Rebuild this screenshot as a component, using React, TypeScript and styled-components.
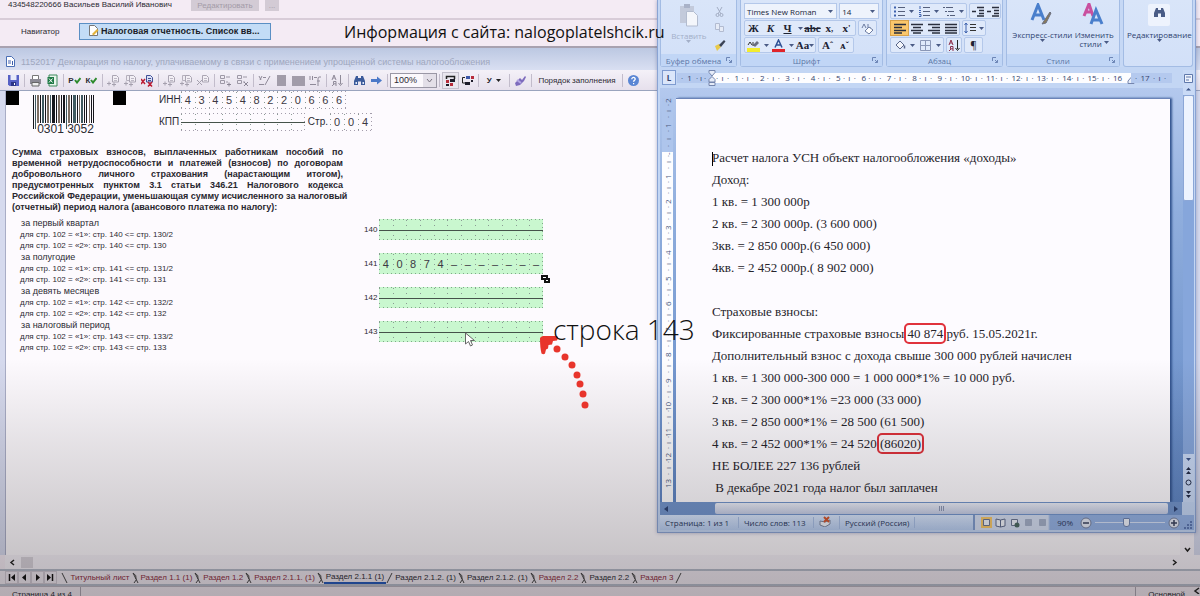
import React from "react";
import styled, { createGlobalStyle, css } from "styled-components";

const Global = createGlobalStyle`
  * { box-sizing: border-box; }
  html, body, #root { height: 100%; margin: 0; }
  body { overflow: hidden; font-family: "Liberation Sans", sans-serif; }
  button, input, select { font: inherit; color: inherit; margin: 0; padding: 0; border: 0; background: none; border-radius: 0; }
  h1, h2, p, ul { margin: 0; padding: 0; font-weight: inherit; font-size: inherit; }
`;

/* ---------- desktop ---------- */
const Desktop = styled.div`
  position: relative;
  min-height: 100%;
  height: 100vh;
  display: flex;
  flex-direction: column;
  background: #f4ebf4;
  overflow: hidden;
  color: #2c2a33;
`;
const Shade = styled.div`
  position: absolute;
  inset: 60% 0 0 0;
  background: linear-gradient(to bottom, rgba(20, 14, 16, 0), rgba(20, 14, 16, 0.1) 35%, rgba(20, 14, 16, 0.27));
  pointer-events: none;
`;
const PersonBar = styled.header`
  display: flex;
  align-items: flex-start;
  height: 20px;
  flex: none;
  padding-left: 8px;
  border-bottom: 2px solid #d8ccd8;
  font-size: 8px;
  line-height: 9px;
`;
const PersonName = styled.span`
  width: 183px;
  white-space: nowrap;
`;
const DisabledButton = styled.button<{ $w: number }>`
  width: ${(p) => p.$w}px;
  height: 11px;
  margin-right: 6px;
  background: #d3cbd5;
  color: #a39ba8;
  line-height: 9px;
`;
const NavBar = styled.nav`
  display: flex;
  align-items: center;
  flex: none;
  height: 28px;
  padding: 0 0 4px 21px;
  border-bottom: 2px solid #a8a2b0;
  font-size: 8px;
`;
const NavLink = styled.a`
  width: 58px;
  color: inherit;
  text-decoration: none;
`;
const NavTab = styled.button`
  display: flex;
  align-items: center;
  gap: 2px;
  width: 192px;
  height: 17px;
  padding-left: 9px;
  border: 1px solid #5a8fc4;
  background: #c3dcf6;
  font-weight: bold;
  font-size: 9px;
  color: #1a1c28;
  white-space: nowrap;
`;
const TitleBar = styled.div`
  display: flex;
  align-items: center;
  gap: 6px;
  flex: none;
  height: 22px;
  padding: 5px 0 0 6px;
  background: linear-gradient(#bcc8e2, #d9dff2);
  color: #9fa7be;
  font-size: 9px;
  white-space: nowrap;
`;

/* ---------- report toolbar ---------- */
const Toolbar = styled.div`
  display: flex;
  align-items: center;
  flex: none;
  height: 21px;
  padding-left: 5px;
  background: linear-gradient(#f4f1f8, #e6e0ec);
  border-bottom: 1px solid #9aa4be;
  font-size: 8px;
`;
const Tool = styled.button<{ $on?: boolean; $w?: number }>`
  display: flex;
  align-items: center;
  justify-content: center;
  flex: none;
  width: ${(p) => p.$w ?? 17}px;
  height: 17px;
  white-space: nowrap;
  ${(p) => p.$on && css`border: 1px solid #c3bfcb; background: #e9e6ee;`}
`;
const Divider = styled.i`
  flex: none;
  width: 1px;
  height: 13px;
  margin: 0 2px;
  background: #c2bccb;
`;
const ZoomWrap = styled.div`
  position: relative;
  width: 47px;
  height: 15px;
  svg { position: absolute; right: 1px; top: 1px; pointer-events: none; }
`;
const ZoomBox = styled.select`
  appearance: none;
  width: 100%;
  height: 15px;
  padding-left: 3px;
  border: 1px solid #9a97a5;
  background: #fbf8fc;
  font-size: 9px;
`;

/* ---------- tax form ---------- */
const FormArea = styled.div`
  display: flex;
  flex: 1;
  min-height: 0;
  border: solid #d6daee;
  border-width: 0 6px 0 5px;
`;
const Form = styled.main`
  flex: 1;
  min-width: 0;
  overflow: hidden;
  border-left: 1px solid #a9adc6;
  background: #fdfafe;
`;
const FormScroll = styled.div`
  display: flex;
  flex-direction: column;
  justify-content: flex-end;
  align-items: center;
  width: 14px;
  padding-bottom: 2px;
  background: #f6f2f9;
`;
const FormHead = styled.div`
  display: flex;
  align-items: flex-start;
  height: 56px;
`;
const Marker = styled.i`
  flex: none;
  width: 13px;
  height: 14px;
  background: #000;
`;
const Barcode = styled.figure`
  margin: 4px 15px 0 14px;
  width: 65px;
  text-align: center;
  font-size: 12px;
  line-height: 11px;
  color: #2a2a30;
  svg { display: block; }
  figcaption { margin-top: -5px; white-space: nowrap; }
`;
const CodeLabel = styled.span<{ $w: number; $end?: boolean }>`
  width: ${(p) => p.$w}px;
  font-size: 10px;
  line-height: 18px;
  text-align: ${(p) => (p.$end ? "right" : "left")};
  padding-right: 2px;
`;
const Ids = styled.div`
  margin-left: 33px;
`;
const IdRow = styled.div<{ $top?: number }>`
  display: flex;
  align-items: center;
  padding-top: ${(p) => p.$top ?? 0}px;
`;
const dots = (c: string, bg: string) => css`
  background:
    linear-gradient(90deg, ${c} 1px, transparent 1px) left top / 4px 1px repeat-x,
    linear-gradient(90deg, ${c} 1px, transparent 1px) left bottom / 4px 1px repeat-x,
    linear-gradient(${c} 1px, transparent 1px) right top / 1px 4px repeat-y,
    ${bg};
`;
const Cells = styled.div<{ $n: number; $w: number; $green?: boolean }>`
  position: relative;
  display: grid;
  grid-template-columns: repeat(${(p) => p.$n}, 1fr);
  flex: none;
  width: ${(p) => p.$w}px;
  height: ${(p) => (p.$green ? 21 : 18)}px;
  ${(p) => (p.$green ? dots("#7fa888", "#c9f7cf") : dots("#a39dab", "transparent"))}
  font-size: 11px;
  color: #3c3843;
`;
const Cell = styled.span`
  display: flex;
  align-items: center;
  justify-content: center;
  background: linear-gradient(#8a9a94 1px, transparent 1px) left 1px / 1px 5px repeat-y;
`;
const Strike = styled.i`
  position: absolute;
  left: 0;
  right: 0;
  top: 50%;
  height: 1px;
  background: #45524a;
`;
const Lead = styled.p`
  width: 331px;
  margin-left: 6px;
  font-weight: bold;
  font-size: 9px;
  line-height: 11px;
  color: #29272f;
  span { display: block; text-align-last: justify; white-space: nowrap; }
  span:last-child { text-align-last: left; }
`;
const Periods = styled.ul`
  list-style: none;
  padding-top: 4px;
`;
const Period = styled.li`
  display: flex;
  align-items: flex-start;
  height: 34px;
  padding-left: 14px;
`;
const PeriodText = styled.div`
  width: 344px;
  font-size: 8px;
  line-height: 11px;
  h2 { font-size: 9px; line-height: 12px; padding-left: 1px; }
`;
const FieldLabel = styled.label`
  width: 15px;
  padding-top: 2px;
  font-size: 8px;
  line-height: 22px;
`;
const FieldBox = styled.div`
  padding-top: 2px;
`;

/* ---------- bottom ---------- */
const HScroll = styled.div`
  display: flex;
  align-items: center;
  flex: none;
  height: 14px;
  margin-left: 5px;
  padding: 0 22px 0 4px;
  background: #f6f2f9;
`;
const HThumb = styled.i`
  width: 12px;
  height: 11px;
  margin-left: 5px;
  margin-right: auto;
  background: #d9d4dc;
`;
const SheetTabs = styled.div`
  display: flex;
  align-items: center;
  flex: none;
  height: 17px;
  padding-left: 5px;
  border-top: 2px solid #b4bac8;
  border-bottom: 2px solid #b4bac8;
  background: #eee8f0;
  font-size: 8px;
`;
const StepButton = styled.button`
  display: flex;
  align-items: center;
  justify-content: center;
  width: 13px;
  height: 13px;
  border: 1px solid #cfc8d2;
`;
const SheetTab = styled.button<{ $red?: boolean; $active?: boolean }>`
  height: 12px;
  padding: 0 2px;
  white-space: nowrap;
  color: ${(p) => (p.$red ? "#8d2b3c" : "#2c2a33")};
  ${(p) => p.$active && css`border-bottom: 2px solid #2458b8;`}
`;
const StatusBar = styled.footer`
  display: flex;
  flex: none;
  height: 10px;
  overflow: hidden;
  border-top: 1px solid #b9b3be;
  font-size: 8px;
  line-height: 15px;
  background: #eee6ee;
`;
const StatusCell = styled.span<{ $end?: boolean }>`
  padding: 0 8px 0 12px;
  border: solid #aaa4b0;
  border-width: ${(p) => (p.$end ? "0 0 0 1px" : "0 1px 0 0")};
  margin-left: ${(p) => (p.$end ? "auto" : "0")};
`;

/* ---------- annotations over the windows ---------- */
const Caption = styled.div<{ $x: number; $y: number; $size: number; $light?: boolean }>`
  position: absolute;
  left: ${(p) => p.$x}px;
  top: ${(p) => p.$y}px;
  font-family: "Open Sans", sans-serif;
  font-weight: ${(p) => (p.$light ? 300 : 400)};
  font-size: ${(p) => p.$size}px;
  line-height: ${(p) => p.$size + 8}px;
  color: #111;
  white-space: nowrap;
`;
const Overlay = styled.svg<{ $x: number; $y: number }>`
  position: absolute;
  left: ${(p) => p.$x}px;
  top: ${(p) => p.$y}px;
`;

/* ---------- word processor ---------- */
const Word = styled.section`
  position: absolute;
  left: 657px;
  right: 4px;
  top: 0;
  height: 533px;
  display: flex;
  flex-direction: column;
  padding: 0 1px 2px 2px;
  background: #c3d6f4;
  border: solid #8aa4d4;
  border-width: 0 1px 1px 1px;
  box-shadow: 0 0 4px rgba(60, 70, 120, 0.4);
  font-family: "Open Sans", "Noto Sans", sans-serif;
  font-size: 8px;
  color: #35456e;
`;
const Ribbon = styled.div`
  display: flex;
  gap: 3px;
  flex: none;
  height: 67px;
  background: #c6d8f5;
`;
const Group = styled.div<{ $w: number }>`
  display: flex;
  flex-direction: column;
  width: ${(p) => p.$w}px;
  flex: none;
  border: 1px solid #a3bce4;
  border-top: 0;
  border-radius: 0 0 3px 3px;
  background: linear-gradient(#d9e5f9, #d2e0f8);
`;
const GroupBody = styled.div<{ $row?: boolean }>`
  display: flex;
  flex-direction: ${(p) => (p.$row ? "row" : "column")};
  justify-content: ${(p) => (p.$row ? "space-evenly" : "flex-start")};
  gap: ${(p) => (p.$row ? 0 : 1)}px;
  flex: 1;
  padding: 3px 3px 0;
`;
const GroupCaption = styled.div`
  display: flex;
  align-items: center;
  height: 12px;
  background: #c1d6f6;
  color: #5c76a6;
  span { flex: 1; text-align: center; white-space: nowrap; }
  svg { margin-right: 4px; }
`;
const RibbonRow = styled.div`
  display: flex;
  gap: 2px;
  height: 16px;
`;
const Strip = styled.div`
  display: flex;
  border: 1px solid #b4c8ea;
  border-radius: 2px;
  background: #dfe9fa;
`;
const StripButton = styled.button<{ $on?: boolean; $w?: number; $serif?: boolean }>`
  display: flex;
  align-items: center;
  justify-content: center;
  width: ${(p) => p.$w ?? 17}px;
  color: #1d2333;
  font-size: 10px;
  line-height: 13px;
  ${(p) => p.$serif && css`font-family: "Liberation Serif", serif; font-weight: bold; font-size: 11px;`}
  ${(p) => p.$on && css`background: #fbc76b; box-shadow: 0 0 0 1px #d8a24b;`}
`;
const FontSelect = styled.button<{ $w: number }>`
  display: flex;
  align-items: center;
  justify-content: space-between;
  width: ${(p) => p.$w}px;
  padding: 0 3px 0 2px;
  border: 1px solid #b4c8ea;
  background: #eef3fc;
  color: #20263a;
  font-size: 8px;
`;
const BigButton = styled.button<{ $faded?: boolean }>`
  display: flex;
  flex-direction: column;
  align-items: center;
  color: ${(p) => (p.$faded ? "#a3afc8" : "#2e4270")};
  font-size: 8px;
  line-height: 9px;
  white-space: nowrap;
  svg { flex: none; margin-bottom: 3px; }
`;
const SideIcons = styled.div`
  display: flex;
  flex-direction: column;
  justify-content: space-around;
`;
const RulerRow = styled.div`
  display: flex;
  align-items: center;
  flex: none;
  height: 21px;
  padding: 0 22px 0 2px;
  i { font-style: normal; }
`;
const Corner = styled.button`
  width: 14px;
  height: 15px;
  margin-right: 1px;
  border: 1px solid #7e9bd0;
  background: #dbe6fa;
  font-weight: bold;
  line-height: 12px;
`;
const RulerPart = styled.div<{ $blue?: boolean; $w?: number; $n: number }>`
  position: relative;
  display: grid;
  grid-template-columns: repeat(${(p) => p.$n}, 1fr);
  align-items: center;
  ${(p) => (p.$w ? css`width: ${p.$w}px; flex: none; padding: 0 6px 0 4px;` : css`flex: 1; padding: 0 9px 0 4px;`)}
  height: 10px;
  background: ${(p) => (p.$blue ? "#b4c9ee" : "#fdfdff")};
  line-height: 10px;
`;
const Indent = styled.span<{ $right?: boolean }>`
  position: absolute;
  top: -3px;
  ${(p) => (p.$right ? "right: -4px;" : "left: -4px;")}
  line-height: 0;
`;
const RulerCell = styled.span`
  display: flex;
  justify-content: space-between;
  b { font-weight: 400; width: 9px; display: flex; justify-content: center; }
`;
const Work = styled.div`
  flex: 1;
  min-height: 0;
  display: flex;
  background: linear-gradient(#b4c9ee, #90aedd 30%, #5f86c4);
`;
const VRuler = styled.div`
  display: flex;
  flex-direction: column;
  flex: none;
  width: 11px;
  margin: 10px 3px 0 2px;
  background: linear-gradient(#aec5ec 54px, #fdfdff 54px);
  color: #4c5a80;
  overflow: hidden;
  i { font-style: normal; }
`;
const VCell = styled.span<{ $h?: number }>`
  writing-mode: vertical-rl;
  transform: rotate(180deg);
  flex: none;
  display: flex;
  justify-content: space-between;
  flex-direction: row-reverse;
  height: ${(p) => p.$h ?? 25}px;
  width: 11px;
  line-height: 11px;
  &:nth-child(even) { height: 26px; }
  b { font-weight: 400; height: 8px; display: flex; justify-content: center; }
`;
const Page = styled.article`
  flex: 1;
  min-width: 0;
  margin: 10px 13px 0 0;
  padding: 48px 0 0 36px;
  overflow: hidden;
  border-top: 1px solid #6b84b8;
  box-shadow: 2px 0 2px #33548f;
  background: #fdfbff;
  font-family: "Liberation Serif", serif;
  font-size: 13px;
  line-height: 22px;
  color: #26242b;
  white-space: pre;
`;
const Boxed = styled.mark`
  background: none;
  color: inherit;
  outline: 2px solid #e0323c;
  outline-offset: 1px;
  border-radius: 2px;
  line-height: 14px;
`;
const Caret = styled.i`
  display: inline-block;
  width: 1px;
  height: 14px;
  margin-right: -1px;
  vertical-align: middle;
  background: #000;
`;
const VScroll = styled.div`
  display: flex;
  flex-direction: column;
  align-items: center;
  gap: 3px;
  flex: none;
  width: 11px;
  margin-top: -18px;
  padding: 2px 0 3px;
  background: #c9daf6;
`;
const VTrack = styled.div`
  flex: 1;
  width: 11px;
  background: #86a6db;
`;
const VThumb = styled.div`
  width: 11px;
  height: 106px;
  border: 1px solid #8ba6d6;
  border-radius: 2px;
  background: #edf3fe;
`;
const WordHScroll = styled.div`
  display: flex;
  align-items: center;
  flex: none;
  height: 13px;
  margin: 0 12px 0 0;
  padding: 0 4px;
  background: #7295cd;
`;
const WordHThumb = styled.div`
  flex: 1;
  height: 11px;
  margin: 0 6px 0 47px;
  border-radius: 2px;
  background: linear-gradient(#eef1fb, #c4cde6);
  display: flex;
  align-items: center;
  justify-content: center;
`;
const WordStatus = styled.div`
  display: flex;
  align-items: center;
  flex: none;
  height: 15px;
  background: linear-gradient(#d8e6fc, #b7cdf0);
  color: #2c3a60;
`;
const StatusItem = styled.span<{ $w: number }>`
  width: ${(p) => p.$w}px;
  padding-left: 5px;
  border-right: 1px solid #a6bde4;
  white-space: nowrap;
`;
const ViewTools = styled.div`
  display: flex;
  align-items: center;
  gap: 3px;
  margin-left: auto;
  padding: 0 1px 0 6px;
  height: 15px;
  border-left: 2px solid #7f9bcd;
  background: linear-gradient(90deg, #d4def2 73px, #94b2e4 75px);
`;
const ZoomText = styled.span`
  margin: 0 4px 0 6px;
`;
const ZoomLine = styled.input`
  appearance: none;
  width: 70px;
  height: 12px;
  background: linear-gradient(#d5e1f7, #d5e1f7) center / 100% 1px no-repeat;
  &::-webkit-slider-thumb { appearance: none; width: 7px; height: 9px; border: 1px solid #6d83b0; border-radius: 1px 1px 3px 3px; background: #eef2fb; }
`;

/* ---------- icons ---------- */
const Svg = ({ w = 13, h = 13, children }: { w?: number; h?: number; children: React.ReactNode }) => (
  <svg width={w} height={h} viewBox={`0 0 ${w} ${h}`} fill="none" aria-hidden="true">{children}</svg>
);
const Down = ({ c = "#4a5b85" }: { c?: string }) => <Svg w={5} h={3}><path d="M0 0h5L2.500 3z" fill={c} /></Svg>;
const SaveIcon = () => (
  <Svg><path d="M1 1h11v11H2.500L1 10.500z" fill="#5660c4" /><path d="M3.500 1h6v5h-6z" fill="#e8ebfa" /><path d="M4 8h5v4H4z" fill="#2b3384" /><path d="M7 9h1v2H7z" fill="#fff" /></Svg>
);
const PrinterIcon = () => (
  <Svg><path d="M3.500 5V1.500h6V5" stroke="#777" fill="#fff" /><path d="M1 5h11v5H1z" fill="#8c8a94" /><path d="M3 8.500h7v3.500H3z" fill="#eee" stroke="#666" /></Svg>
);
const ExcelIcon = () => (
  <Svg><path d="M3 1h8v11H3z" fill="#e9f5ec" stroke="#3e8a5c" /><path d="M1.500 3h6.500v7H1.500z" fill="#1f7a46" /><path d="M3 4.500l3.500 4M6.500 4.500L3 8.500" stroke="#fff" /></Svg>
);
const CheckIcon = ({ letter }: { letter: string }) => (
  <><b>{letter}</b><Svg w={7} h={8}><path d="M1 4l2 2.500L6.500 2" stroke="#2d8a2d" strokeWidth="2" /></Svg></>
);
const PagesIcon = ({ kind, live }: { kind: string; live?: boolean }) => (
  <Svg>
    {kind.includes("d") && <path d="M2.500 1.500h5v5h-5z" stroke="#b5b0bd" fill="#eeebf2" />}
    <path d="M5.500 1.500h4l2 2V8h-6z" stroke={live ? "#3f4f96" : "#aaa5b3"} fill={live ? "#d9dff5" : "#f2eff5"} />
    <path d="M7 4.500h3M7 6.500h3" stroke={live ? "#3f4f96" : "#bdb8c5"} />
    {kind.includes("+") && <path d="M0 9.500h4M2 7.500v4M5 10.500h4M7 8.500v4" stroke="#a5a0ae" />}
    {kind.includes("x") && <path d={live ? "M0 5l4 5M4 5l-4 5M7 8l4 4.500M11 8l-4 4.500" : "M0 6l5 5M5 6l-5 5"} stroke={live ? "#bb1c34" : "#a5a0ae"} strokeWidth={live ? 1.5 : 1} />}
  </Svg>
);
const RowsIcon = ({ x }: { x?: boolean }) => (
  <Svg><path d="M1.500 1.500h4v3h-4zM1.500 6.500h4v3h-4zM7 3h4M7 8h2" stroke="#9d98a6" />{x ? <path d="M8 8l4 4M12 8l-4 4" stroke="#8a8594" /> : <path d="M8 10.500h4M10 8.500v4" stroke="#8a8594" />}</Svg>
);
const StrokeIcon = ({ f }: { f?: boolean }) => (
  <Svg><path d={f ? "M1 2v4M3.500 2v4M5 3.500h3M1 10.500h6M12 3h-2q-1 0-1 2v7M8 7h3" : "M1 2l2 4M4 2L2 6M5 3.500h3M1 10.500h5M12 2L7 11"} stroke="#8f8a99" /></Svg>
);
const BlockIcon = ({ wide }: { wide?: boolean }) => <Svg><path d={wide ? "M0 2h13v10H0z" : "M2 1h9v11H2z"} fill="#a19ca9" /></Svg>;
const SortIcon = ({ live }: { live?: boolean }) => (
  <Svg><path d="M1 6l2-5 2 5M2 4h2M1 12l2-2M5 12V7.500H2.500v2.300H5" stroke={live ? "#8c2f4c" : "#8f8a99"} /><path d="M9.500 1v9M7.500 9l2 2.500 2-2.500" stroke={live ? "#222" : "#8f8a99"} /></Svg>
);
const BinocularsIcon = ({ c = "#3b5a9a" }: { c?: string }) => (
  <Svg><path d="M3 2h2v2h3V2h2l2 5v4H8V7.500H5V11H1V7z" fill={c} /><path d="M2.500 8h1.500v2H2.500zM9.500 8H11v2H9.500z" fill="#dfe7f7" /></Svg>
);
const ArrowIcon = () => <Svg><path d="M1 5h6V2.500L12 6.500 7 10.500V8H1z" fill="#4b79c8" /></Svg>;
const FlowIcon = ({ flip }: { flip?: boolean }) => (
  <Svg>
    {flip ? (
      <><path d="M4 3.500H1.500V9H4" stroke="#222" /><path d="M5 2h4v3H5z" fill="#3c57a8" /><path d="M10 2h3v3h-3z" fill="#b62b3a" /><path d="M4 8h5v3H4zM10 6h2v2h-2z" fill="#1c1c2a" /></>
    ) : (
      <><path d="M2.500 5V2.500h8V5" stroke="#222" strokeWidth="1.500" /><path d="M2 6h3v3H2zM6 9h3v3H6z" fill="#b62b3a" /><path d="M6 5h5v3H6zM2 10h3v2H2z" fill="#1c1c2a" /></>
    )}
  </Svg>
);
const PurpleIcon = () => <Svg><path d="M1 9l5-5 2 2 3-4 1 1-2 4-4 4-4 1z" fill="#7d6bbd" /><path d="M3 6l4 3" stroke="#b4a7e4" strokeWidth="2" /></Svg>;
const HelpIcon = () => (
  <Svg><circle cx="6.500" cy="6.500" r="5.500" fill="#5a86d4" /><path d="M4.800 5.200c0-2.400 3.600-2.200 3.400 0-.1 1.200-1.700 1.200-1.700 2.600" stroke="#fff" strokeWidth="1.300" /><path d="M6 9h1.200v1.200H6z" fill="#fff" /></Svg>
);
const PageIcon = () => <Svg w={9} h={11}><path d="M.5.5h5l3 3v7h-8z" fill="#fff" stroke="#4b6fb5" /><path d="M2 5h3M2 7h3M6.500 5v4" stroke="#3e5fae" /></Svg>;
const NoteIcon = () => <Svg w={10} h={12}><path d="M.5.5h5l3 3v7h-8z" fill="#fff" stroke="#777" /><path d="M3 9l5-5 1.500 1.500-5 5z" fill="#e2b33c" /></Svg>;
const Slash = ({ back }: { back?: boolean }) => <Svg w={7} h={12}>{back ? <path d="M1 1l5 10" stroke="#444" /> : <path d="M6 1L1 11" stroke="#444" />}</Svg>;
const Cross = () => <Svg w={7} h={12}><path d="M1 1l5 10M4.500 7.500L2 11M1 1q4 2 3 6" stroke="#444" /></Svg>;
const Chevron = ({ d }: { d: string }) => <Svg w={7} h={7}><path d={d} stroke="#222" strokeWidth="1.500" /></Svg>;
const Launcher = () => <Svg w={6} h={6}><path d="M.5 4V.5H4M3 3l2.500 2.500M5.500 3v2.500H3" stroke="#6d86b6" /></Svg>;
const PasteIcon = () => (
  <Svg w={22} h={25}><path d="M2 3h14v17H2z" fill="#c3cadb" /><path d="M6 1h6v4H6z" fill="#a9b2c8" /><path d="M8.500 8.500h7l4 4V23h-11z" fill="#f4f6fb" stroke="#b3bccf" /></Svg>
);
const ScissorsIcon = () => <Svg w={11} h={11}><path d="M3 1l4 7M8 1L4 8" stroke="#a3adc3" /><circle cx="3.500" cy="9" r="1.500" stroke="#a3adc3" /><circle cx="7.500" cy="9" r="1.500" stroke="#a3adc3" /></Svg>;
const CopyIcon = () => <Svg w={11} h={11}><path d="M1.500 1.500h4v6h-4zM5.500 4.500h4v5h-4z" fill="#e6ebf6" stroke="#b2bbd0" /></Svg>;
const BrushIcon = () => <Svg w={12} h={12}><path d="M1 7l4-2 2 3-4 4z" fill="#e8c94a" /><path d="M5 6l5-5 1.500 1.500L7 8z" fill="#3b4356" /></Svg>;
const List = ({ kind }: { kind: number }) => (
  <Svg w={12} h={12}>
    {kind < 2 && <path d="M5 2.500h7M5 6.500h7M5 10.500h7" stroke="#55607c" />}
    {kind === 0 && <path d="M1 1.500h2v2H1zM1 5.500h2v2H1zM1 9.500h2v2H1z" fill="#3e62ae" />}
    {kind === 1 && <path d="M2 1v3M1 5.500h2M1 7.500h2M1 9.500h2v2H1" stroke="#3e62ae" />}
    {kind === 2 && <path d="M0 2.500h2M3 2.500h7M2 6.500h2M5 6.500h6M4 10.500h2M7 10.500h5" stroke="#55607c" />}
  </Svg>
);
const Lines = ({ d }: { d: string }) => <Svg w={12} h={11}><path d={d} stroke="#2a2f3d" strokeWidth="1.500" /></Svg>;
const Spacing = () => <Svg w={12} h={12}><path d="M2 1v10M.5 3L2 1l1.500 2M.5 9L2 11 3.500 9" stroke="#3e62ae" /><path d="M6 2.500h6M6 5.500h6M6 8.500h6" stroke="#333" /></Svg>;
const Bucket = () => <Svg w={12} h={12}><path d="M2 6l4-4 4 4-4 4z" fill="#f4f6fb" stroke="#5a678a" /><path d="M10.500 6.500v3" stroke="#5a678a" strokeWidth="1.500" /></Svg>;
const Borders = () => <Svg w={11} h={11}><path d="M.5.5h10v10H.5zM5.500.5v10M.5 5.500h10" stroke="#8a97b6" /></Svg>;
const Highlighter = () => <Svg w={13} h={13}><path d="M6 6l4-4 2 2-4 4z" fill="#6a6f80" /><path d="M0 9h13v4H0z" fill="#f3ec2e" /><path d="M1 6l2-3 2 3M6 7V3" stroke="#333" /></Svg>;
const ColorA = () => <Svg w={13} h={13}><path d="M3 8.500L6.500 1 10 8.500M4.300 6h4.400" stroke="#2d4f94" strokeWidth="1.500" /><path d="M0 10h13v3H0z" fill="#e0242a" /></Svg>;
const Eraser = () => <Svg w={13} h={13}><path d="M1 6l2-4 2 4M7 2v4h3" stroke="#6d7da3" /><path d="M4 9l4-4 4 3-4 4z" fill="#fff" stroke="#6d7da3" /></Svg>;
const StyleA = ({ two }: { two?: boolean }) => (
  <Svg w={24} h={24}>
    {two && <path d="M2 13L7 1l4 12M4 9h6" stroke="#c9509f" strokeWidth="3" />}
    <path d={two ? "M9 21l5-14 6 14M11 17h7" : "M2 17L8 2l6 15M4 12h8"} stroke="#4a7fcc" strokeWidth="3" />
    {!two && <path d="M12 21l8-12 1 1-5 10z" fill="#8a7a58" stroke="#6b6f80" />}
  </Svg>
);
const ViewIcon = ({ kind }: { kind: number }) => (
  <Svg w={11} h={11}>
    {kind === 0 && <path d="M0 0h11v11H0z" fill="#f6c768" />}
    {kind === 1 ? <path d="M1 2l4.500 1L10 2v7l-4.500 1L1 9zM5.500 3v7" stroke="#5e6b8c" fill="#f2f5fb" /> : <path d="M2.500 2.500h6v6h-6z" fill={kind > 2 ? "#a3afc8" : "#eef2fa"} stroke={kind > 2 ? "#a3afc8" : "#6b7692"} />}
    {kind === 2 && <circle cx="8" cy="8" r="2.500" fill="#4c6a62" />}
  </Svg>
);
const Round = ({ plus }: { plus?: boolean }) => (
  <Svg w={12} h={12}><circle cx="6" cy="6" r="5" fill="#e4e9f5" stroke="#75819f" /><path d={plus ? "M3 6h6M6 3v6" : "M3 6h6"} stroke="#39425e" strokeWidth="1.500" /></Svg>
);

const bars = "1111211121112111311121112111211131111121111211111";
const BarcodeArt = () => {
  let x = 0;
  return (
    <svg width="65" height="34" viewBox="0 0 65 34" aria-hidden="true">
      {bars.split("").map((b, i) => {
        const w = Number(b);
        const left = x;
        x += w;
        if (i % 2) return null;
        return <rect key={i} x={left} width={w} height={left < 4 || left > 60 || (left > 30 && left < 34) ? 34 : 28} fill={i % 8 === 4 ? "#7d6f64" : i % 6 === 2 ? "#3f5960" : "#15161c"} />;
      })}
    </svg>
  );
};

/* ---------- data ---------- */
const periods = [
  { title: "за первый квартал", row: 140, ref: 130, value: "" },
  { title: "за полугодие", row: 141, ref: 131, value: "40874-------" },
  { title: "за девять месяцев", row: 142, ref: 132, value: "" },
  { title: "за налоговый период", row: 143, ref: 133, value: "" },
];
const sheets = [
  { t: "Титульный лист", red: true }, { t: "Раздел 1.1 (1)", red: true }, { t: "Раздел 1.2", red: true },
  { t: "Раздел 2.1.1. (1)", red: true }, { t: "Раздел 2.1.1 (1)", active: true }, { t: "Раздел 2.1.2. (1)" },
  { t: "Раздел 2.1.2. (1)" }, { t: "Раздел 2.2", red: true }, { t: "Раздел 2.2" }, { t: "Раздел 3", red: true },
];

const DigitCells = ({ value, n, w, green }: { value: string; n: number; w: number; green?: boolean }) => (
  <Cells $n={n} $w={w} $green={green}>
    {Array.from({ length: n }, (_, i) => <Cell key={i}>{value[i] === "-" ? "–" : value[i]}</Cell>)}
    {!value && <Strike />}
  </Cells>
);
const Ticks = ({ label }: { label: number | string }) => (
  <><i>·</i><i>ı</i><i>·</i><b>{label}</b></>
);

const ReportToolbar = () => (
  <Toolbar>
    <Tool aria-label="Сохранить"><SaveIcon /></Tool><Divider />
    <Tool><PrinterIcon /></Tool><Tool><ExcelIcon /></Tool><Divider />
    <Tool><CheckIcon letter="Р" /></Tool><Tool><CheckIcon letter="К" /></Tool><Divider />
    <Tool><PagesIcon kind="+" /></Tool><Tool><PagesIcon kind="d+" /></Tool><Tool><PagesIcon kind="x" live /></Tool><Divider />
    <Tool><PagesIcon kind="+" /></Tool><Tool><PagesIcon kind="d+" /></Tool><Tool><PagesIcon kind="x" /></Tool><Divider />
    <Tool><RowsIcon /></Tool><Tool><RowsIcon x /></Tool><Divider />
    <Tool><StrokeIcon /></Tool><Tool><BlockIcon /></Tool><Tool><BlockIcon wide /></Tool><Tool><StrokeIcon f /></Tool><Divider />
    <Tool><SortIcon /></Tool><Divider />
    <Tool><BinocularsIcon /></Tool><Tool><ArrowIcon /></Tool><Divider />
    <ZoomWrap>
      <ZoomBox aria-label="Масштаб" defaultValue="100%"><option>100%</option></ZoomBox>
      <Svg><path d="M0 0h13v13H0z" fill="#e3dfe8" /><path d="M4 5l2.500 3L9 5" stroke="#77727f" /></Svg>
    </ZoomWrap>
    <Divider />
    <Tool $on><FlowIcon /></Tool><Tool><FlowIcon flip /></Tool><Divider />
    <Tool $w={26}><b>У</b>&nbsp;&nbsp;<Down c="#222" /></Tool><Divider />
    <Tool><PurpleIcon /></Tool><Divider />
    <Tool $w={86}>Порядок заполнения</Tool><Divider />
    <Tool aria-label="Справка"><HelpIcon /></Tool>
  </Toolbar>
);

const TaxForm = () => (
  <FormArea>
    <Form>
      <FormHead>
        <Marker />
        <Barcode><BarcodeArt /><figcaption>0301 3052</figcaption></Barcode>
        <Marker />
        <Ids>
          <IdRow><CodeLabel $w={22}>ИНН</CodeLabel><DigitCells value="434548220666" n={12} w={165} /></IdRow>
          <IdRow $top={4}>
            <CodeLabel $w={22}>КПП</CodeLabel><DigitCells value="" n={9} w={124} />
            <CodeLabel $w={25} $end>Стр.</CodeLabel><DigitCells value="004" n={3} w={42} />
          </IdRow>
        </Ids>
      </FormHead>
      <Lead>
        <span>Сумма страховых взносов, выплаченных работникам пособий по</span>
        <span>временной нетрудоспособности и платежей (взносов) по договорам</span>
        <span>добровольного личного страхования (нарастающим итогом),</span>
        <span>предусмотренных пунктом 3.1 статьи 346.21 Налогового кодекса</span>
        <span>Российской Федерации, уменьшающая сумму исчисленного за налоговый</span>
        <span>(отчетный) период налога (авансового платежа по налогу):</span>
      </Lead>
      <Periods>
        {periods.map((p) => (
          <Period key={p.row}>
            <PeriodText>
              <h2>{p.title}</h2>
              <p>для стр. 102 = «1»: стр. {p.row} &lt;= стр. {p.ref}/2</p>
              <p>для стр. 102 = «2»: стр. {p.row} &lt;= стр. {p.ref}</p>
            </PeriodText>
            <FieldLabel>{p.row}</FieldLabel>
            <FieldBox><DigitCells value={p.value} n={12} w={164} green /></FieldBox>
          </Period>
        ))}
      </Periods>
    </Form>
    <FormScroll><Chevron d="M1 2l2.500 3L6 2" /></FormScroll>
  </FormArea>
);

const WordWindow = () => (
  <Word>
    <Ribbon>
      <Group $w={77}>
        <GroupBody $row>
          <BigButton $faded><PasteIcon />Вставить<Down c="#a3afc8" /></BigButton>
          <SideIcons><ScissorsIcon /><CopyIcon /><BrushIcon /></SideIcons>
        </GroupBody>
        <GroupCaption><span>Буфер обмена</span><Launcher /></GroupCaption>
      </Group>
      <Group $w={143}>
        <GroupBody>
          <RibbonRow><FontSelect $w={94}>Times New Roman<Down /></FontSelect><FontSelect $w={40}>14<Down /></FontSelect></RibbonRow>
          <RibbonRow>
            <Strip>
              <StripButton $serif>Ж</StripButton><StripButton $serif><em>К</em></StripButton><StripButton $serif><u>Ч</u></StripButton>
              <StripButton $w={8}><Down /></StripButton><StripButton $serif><s>abc</s></StripButton>
              <StripButton $serif>x<sub>,</sub></StripButton><StripButton $serif>x<sup>'</sup></StripButton>
            </Strip>
            <Strip><StripButton><Eraser /></StripButton></Strip>
          </RibbonRow>
          <RibbonRow>
            <Strip>
              <StripButton><Highlighter /></StripButton><StripButton $w={8}><Down /></StripButton>
              <StripButton><ColorA /></StripButton><StripButton $w={8}><Down /></StripButton>
              <StripButton $serif $w={20}>Aa<Down /></StripButton>
            </Strip>
            <Strip><StripButton $serif>A<sup>ˆ</sup></StripButton><StripButton $serif>ᴀ<sup>ˇ</sup></StripButton></Strip>
          </RibbonRow>
        </GroupBody>
        <GroupCaption><span>Шрифт</span><Launcher /></GroupCaption>
      </Group>
      <Group $w={117}>
        <GroupBody>
          <RibbonRow>
            <Strip>
              {[0, 1, 2].map((k) => <React.Fragment key={k}><StripButton $w={16}><List kind={k} /></StripButton><StripButton $w={9}><Down /></StripButton></React.Fragment>)}
            </Strip>
            <Strip>
              <StripButton $w={15}><Lines d="M5 1.500h7M7 4.500h5M7 7.500h5M5 10h7M4 5.500H0" /></StripButton>
              <StripButton $w={15}><Lines d="M5 1.500h7M7 4.500h5M7 7.500h5M5 10h7M4 5.500H0" /></StripButton>
            </Strip>
          </RibbonRow>
          <RibbonRow>
            <Strip>
              <StripButton $on><Lines d="M0 1.500h12M0 4.500h8M0 7.500h12M0 10h8" /></StripButton>
              <StripButton><Lines d="M0 1.500h12M2 4.500h8M0 7.500h12M2 10h8" /></StripButton>
              <StripButton><Lines d="M0 1.500h12M4 4.500h8M0 7.500h12M4 10h8" /></StripButton>
              <StripButton><Lines d="M0 1.500h12M0 4.500h12M0 7.500h12M0 10h12" /></StripButton>
            </Strip>
            <Strip><StripButton $w={22}><Spacing />&nbsp;<Down /></StripButton></Strip>
          </RibbonRow>
          <RibbonRow>
            <Strip>
              <StripButton><Bucket /></StripButton><StripButton $w={9}><Down /></StripButton>
              <StripButton><Borders /></StripButton><StripButton $w={9}><Down /></StripButton>
            </Strip>
            <Strip><StripButton $w={14}><SortIcon live /></StripButton></Strip>
            <Strip><StripButton>¶</StripButton></Strip>
          </RibbonRow>
        </GroupBody>
        <GroupCaption><span>Абзац</span><Launcher /></GroupCaption>
      </Group>
      <Group $w={114}>
        <GroupBody $row>
          <BigButton><StyleA />Экспресс-стили<Down /></BigButton>
          <BigButton><StyleA two />Изменить<span>стили <Down /></span></BigButton>
        </GroupBody>
        <GroupCaption><span>Стили</span><Launcher /></GroupCaption>
      </Group>
      <Group $w={70}>
        <GroupBody $row>
          <BigButton><Svg w={24} h={24}><rect x="1" y="1" width="22" height="22" rx="2" fill="#eef3fd" /><g transform="translate(6 4)"><path d="M3 1h2v2h3V1h2l2 5v4H8V6.500H5V10H1V6z" fill="#4a5c86" /></g></Svg>Редактирование<Down /></BigButton>
        </GroupBody>
      </Group>
    </Ribbon>
    <RulerRow>
      <Corner>L</Corner>
      <RulerPart $blue $w={35} $n={1}><RulerCell><i>·</i><b>1</b><i>·</i><i>ı</i><i>·</i></RulerCell></RulerPart>
      <RulerPart $n={16}>
        {Array.from({ length: 16 }, (_, i) => <RulerCell key={i}><Ticks label={i + 1} /></RulerCell>)}
        <Indent><Svg w={8} h={16}><path d="M1 .5h6v2L4 6 1 2.500zM1 12V9.500L4 6.500 7 9.500V12zM1 12.500h6v3H1z" fill="#e6ecf8" stroke="#7485ad" /></Svg></Indent>
        <Indent $right><Svg w={8} h={15}><path d="M1 13.500V11L4 7.500 7 11v2.500z" fill="#e6ecf8" stroke="#7485ad" /></Svg></Indent>
      </RulerPart>
      <RulerPart $blue $w={41} $n={1}><RulerCell><i>·</i><b>17</b><i>·</i><i>ı</i><i>·</i></RulerCell></RulerPart>
    </RulerRow>
    <Work>
      <VRuler>
        <VCell $h={6}><b>2</b></VCell>
        <VCell><Ticks label={1} /></VCell>
        <VCell><i>·</i><i>ı</i><i>·</i><i>-</i></VCell>
        {Array.from({ length: 13 }, (_, i) => <VCell key={i}><Ticks label={i + 1} /></VCell>)}
      </VRuler>
      <Page>
        <p><Caret />Расчет налога УСН объект налогообложения «доходы»</p>
        <p>Доход:</p>
        <p>1 кв. = 1 300 000р</p>
        <p>2 кв. = 2 300 000р. (3 600 000)</p>
        <p>3кв. = 2 850 000р.(6 450 000)</p>
        <p>4кв. = 2 452 000р.( 8 902 000)</p>
        <p> </p>
        <p>Страховые взносы:</p>
        <p>Фиксированные страховые взносы <Boxed>40 874</Boxed> руб. 15.05.2021г.</p>
        <p>Дополнительный взнос с дохода свыше 300 000 рублей начислен</p>
        <p>1 кв. = 1 300 000-300 000 = 1 000 000*1% = 10 000 руб.</p>
        <p>2 кв. = 2 300 000*1% =23 000 (33 000)</p>
        <p>3 кв. = 2 850 000*1% = 28 500 (61 500)</p>
        <p>4 кв. = 2 452 000*1% = 24 520 <Boxed>(86020)</Boxed></p>
        <p>НЕ БОЛЕЕ 227 136 рублей</p>
        <p> В декабре 2021 года налог был заплачен</p>
      </Page>
      <VScroll>
        <Svg w={11} h={12}><path d="M1.500 2.500h8v8h-8z" fill="#eef3fd" stroke="#6079ab" /><path d="M3 5h5M3 8h3" stroke="#6079ab" /></Svg>
        <Svg w={11} h={5}><path d="M3 3.500L5.500 1 8 3.500z" fill="#3b5388" /></Svg>
        <VTrack><VThumb /></VTrack>
        <Svg w={11} h={6}><path d="M3 1h5L5.500 4z" fill="#3b5388" /></Svg>
        <Svg w={11} h={9}><path d="M3 4L5.500 1 8 4zM3 8l2.500-3L8 8z" fill="#222c48" /></Svg>
        <Svg w={11} h={9}><circle cx="5.500" cy="4.500" r="2.500" stroke="#222c48" /></Svg>
        <Svg w={11} h={9}><path d="M3 1h5L5.500 4zM3 5h5L5.500 8z" fill="#222c48" /></Svg>
      </VScroll>
    </Work>
    <WordHScroll>
      <Svg w={4} h={6}><path d="M4 0v6L0 3z" fill="#2c4374" /></Svg>
      <WordHThumb><Svg w={5} h={5}><path d="M.5 0v5M2.500 0v5M4.500 0v5" stroke="#8c97b5" /></Svg></WordHThumb>
      <Svg w={4} h={6}><path d="M0 0v6l4-3z" fill="#2c4374" /></Svg>
    </WordHScroll>
    <WordStatus>
      <StatusItem $w={79}>Страница: 1 из 1</StatusItem>
      <StatusItem $w={75}>Число слов: 113</StatusItem>
      <StatusItem $w={26}><Svg w={14} h={11}><path d="M1 5l5 1 5-2v4l-5 3-5-2z" fill="#eef1f8" stroke="#7b869f" /><path d="M5 1l5 5M10 1L5 6" stroke="#d4552c" strokeWidth="2" /></Svg></StatusItem>
      <StatusItem $w={75}>Русский (Россия)</StatusItem>
      <ViewTools>
        {[0, 1, 2, 3, 4].map((k) => <ViewIcon key={k} kind={k} />)}
        <ZoomText>90%</ZoomText>
        <Round /><ZoomLine type="range" aria-label="Масштаб" defaultValue={45} /><Round plus />
        <Svg w={10} h={12}><path d="M7 4h2v2H7zM4 7h2v2H4zM7 7h2v2H7zM1 10h2v2H1zM4 10h2v2H4zM7 10h2v2H7z" fill="#5c78b2" /></Svg>
      </ViewTools>
    </WordStatus>
  </Word>
);

export default function App() {
  return (
    <Desktop>
      <Global />
      <PersonBar>
        <PersonName>434548220666 Васильев Василий Иванович</PersonName>
        <DisabledButton $w={68} disabled>Редактировать</DisabledButton>
        <DisabledButton $w={14} disabled>...</DisabledButton>
      </PersonBar>
      <NavBar>
        <NavLink href="#">Навигатор</NavLink>
        <NavTab><NoteIcon />Налоговая отчетность. Список вв...</NavTab>
      </NavBar>
      <TitleBar><PageIcon />1152017 Декларация по налогу, уплачиваемому в связи с применением упрощенной системы налогообложения</TitleBar>
      <ReportToolbar />
      <TaxForm />
      <HScroll><Chevron d="M5 1L2 3.500 5 6" /><HThumb /><Chevron d="M2 1l3 2.500L2 6" /></HScroll>
      <SheetTabs>
        <StepButton><Svg w={7} h={7}><path d="M1.500 0v7" stroke="#111" strokeWidth="1.500" /><path d="M7 0v7L3 3.500z" fill="#111" /></Svg></StepButton>
        <StepButton><Svg w={7} h={7}><path d="M5 0v7L1 3.500z" fill="#111" /></Svg></StepButton>
        <StepButton><Svg w={7} h={7}><path d="M2 0v7l4-3.500z" fill="#111" /></Svg></StepButton>
        <StepButton><Svg w={7} h={7}><path d="M5.500 0v7" stroke="#111" strokeWidth="1.500" /><path d="M0 0v7l4-3.500z" fill="#111" /></Svg></StepButton>
        &nbsp;&nbsp;<Slash back />
        {sheets.map((s, i) => (
          <React.Fragment key={i}>
            <SheetTab $red={s.red} $active={s.active}>{s.t}</SheetTab>
            {s.active || i === sheets.length - 1 ? <Slash /> : <Cross />}
          </React.Fragment>
        ))}
      </SheetTabs>
      <StatusBar>
        <StatusCell>Страница 4 из 4</StatusCell><StatusCell $end>Основной</StatusCell>
        <Chevron d="M6 1L2 4l4 3" />
      </StatusBar>
      <WordWindow />
      <Shade />
      <Overlay $x={541} $y={275} width="9" height="9" viewBox="0 0 9 9"><path d="M0 0h7v3h2v5H3V5H0z" fill="#111" /><path d="M2 2.500h3M5 5.500h2" stroke="#fff" /></Overlay>
      <Overlay $x={465} $y={332} width="10" height="16" viewBox="0 0 10 16"><path d="M.5 1v11l3-2.500 2 4.500 2-1-2-4.500h4z" fill="#fff" stroke="#666" /></Overlay>
      <Overlay $x={538} $y={334} width="54" height="78" viewBox="0 0 54 78">
        <path d="M2 4q1-1.500 3-2h13q2 0 2 2l-1 2.500-4 .5-1 3.500-3.500.5-.5 3.500-2 1-1 4q-1.500 1.500-3.500 0Q2 14 2 4z" fill="#e8352c" />
        {[[19, 15], [27, 23], [34, 31], [39, 41], [42, 50], [45, 60], [47, 71]].map(([x, y]) => <circle key={y} cx={x} cy={y} r="3.500" fill="#e8352c" />)}
      </Overlay>
      <Caption $x={344} $y={20} $size={16}>Информация с сайта: nalogoplatelshcik.ru</Caption>
      <Caption $x={553} $y={311} $size={28} $light>строка 143</Caption>
    </Desktop>
  );
}
